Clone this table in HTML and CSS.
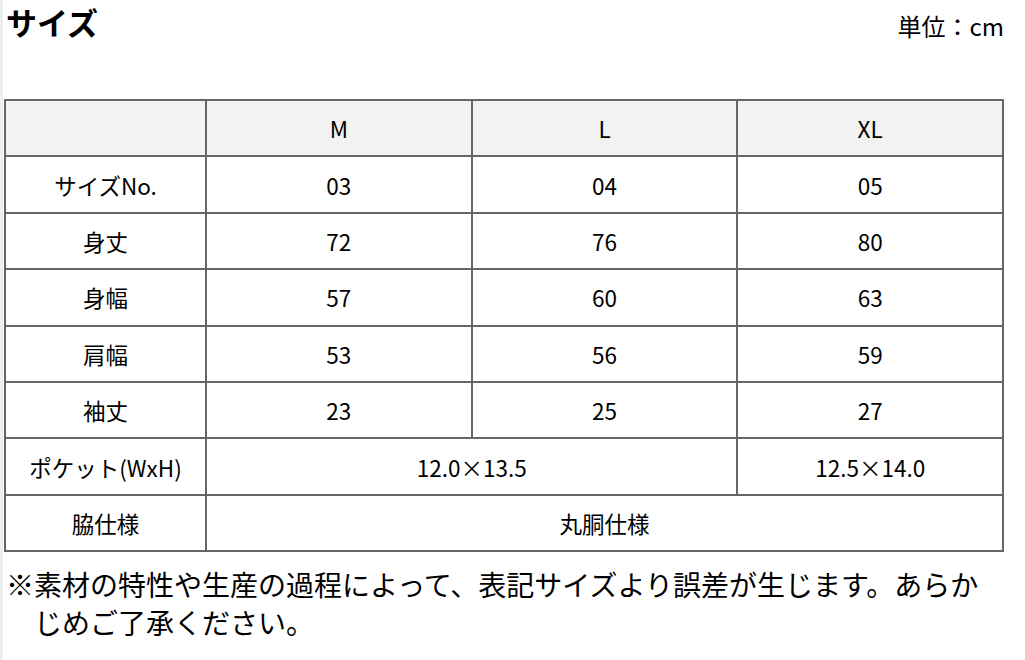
FILE: index.html
```html
<!DOCTYPE html>
<html lang="ja">
<head>
<meta charset="utf-8">
<link rel="stylesheet" href="styles.css">
</head>
<body>
<div class="page">
  <div class="head">
    <h1 class="title">サイズ</h1>
    <div class="unit">単位：cm</div>
  </div>
  <table class="size-table">
    <tr class="th-row"><td></td><td>M</td><td>L</td><td>XL</td></tr>
    <tr><td>サイズNo.</td><td>03</td><td>04</td><td>05</td></tr>
    <tr><td>身丈</td><td>72</td><td>76</td><td>80</td></tr>
    <tr><td>身幅</td><td>57</td><td>60</td><td>63</td></tr>
    <tr><td>肩幅</td><td>53</td><td>56</td><td>59</td></tr>
    <tr><td>袖丈</td><td>23</td><td>25</td><td>27</td></tr>
    <tr><td>ポケット(WxH)</td><td colspan="2">12.0×13.5</td><td>12.5×14.0</td></tr>
    <tr><td>脇仕様</td><td colspan="3">丸胴仕様</td></tr>
  </table>
  <p class="note">※素材の特性や生産の過程によって、表記サイズより誤差が生じます。あらかじめご了承ください。</p>
</div>
</body>
</html>
```

FILE: styles.css
```css
html, body {
  margin: 0;
  padding: 0;
  background: #fff;
}
body {
  font-family: "Noto Sans CJK JP", "Noto Sans", sans-serif;
  color: #000;
}
.page {
  border-left: 3px solid #efefef;
  min-height: 660px;
  box-sizing: border-box;
  width: 1025px;
  padding-left: 1px;
}
.head {
  display: flex;
  justify-content: space-between;
  align-items: flex-start;
  width: 1000px;
  height: 99px;
}
.title {
  margin: 0;
  padding-left: 2px;
  font-size: 31px;
  font-weight: 700;
  line-height: 44px;
}
.unit {
  font-size: 24px;
  line-height: 30px;
  margin-top: 11px;
}
.size-table {
  border-collapse: collapse;
  width: 1000px;
  table-layout: fixed;
  font-size: 22.5px;
}
.size-table td {
  border: 2px solid #666;
  height: 54.4px;
  padding: 0;
  text-align: center;
  vertical-align: middle;
}
.size-table td:first-child {
  width: 199px;
}
.th-row td {
  background: #f2f2f2;
}
.note {
  margin: 13px 0 0 0;
  padding-left: 30px;
  text-indent: -28px;
  font-size: 28px;
  line-height: 38px;
  width: 990px;
  box-sizing: border-box;
}
```
